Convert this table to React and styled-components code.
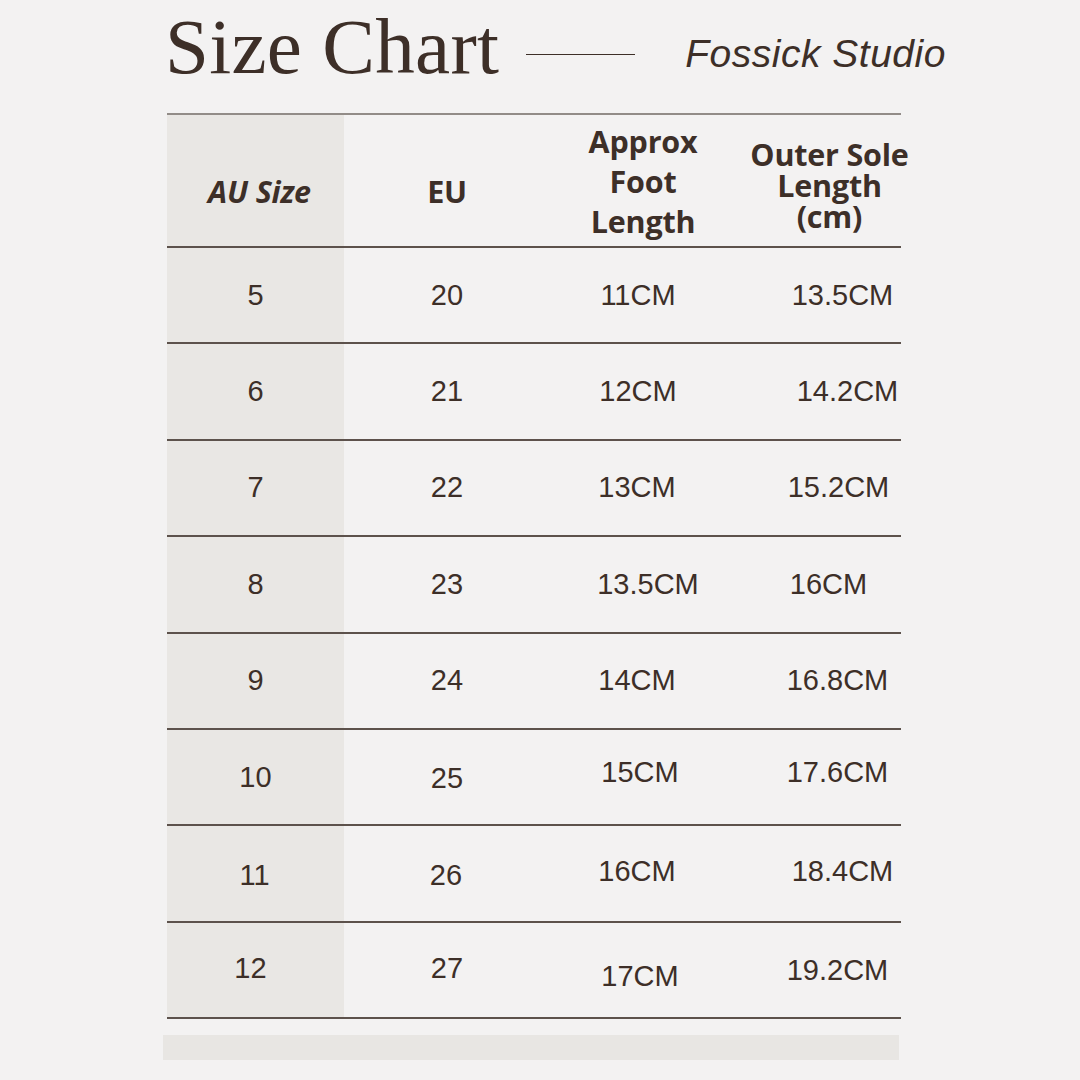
import React from 'react'
import styled, { createGlobalStyle } from 'styled-components'

const GlobalStyle = createGlobalStyle`
  html, body {
    margin: 0;
    padding: 0;
    background: #f3f2f2;
  }
  body {
    width: 1080px;
    height: 1080px;
    overflow: hidden;
  }
`

const ink = '#3d2f28'

const Page = styled.div`
  width: 740px;
  margin-left: 163px;
  padding-top: 10px;
  color: ${ink};
`

const TitleBar = styled.div`
  display: flex;
  align-items: center;
  height: 84px;
  padding-left: 2px;
  width: 800px;
`

const Title = styled.h1`
  margin: 0 0 12px 0;
  flex-shrink: 0;
  white-space: nowrap;
  font-family: "Liberation Serif", serif;
  font-weight: 400;
  font-size: 79px;
  line-height: 1;
  letter-spacing: 0.3px;
`

const Rule = styled.span`
  display: block;
  flex-shrink: 0;
  width: 109px;
  height: 1px;
  background: ${ink};
  margin: 4px 50px 0 27px;
`

const Brand = styled.span`
  flex-shrink: 0;
  font-family: "Liberation Sans", sans-serif;
  font-style: italic;
  font-weight: 400;
  font-size: 39px;
  letter-spacing: 0.5px;
  margin-top: 4px;
  white-space: nowrap;
`

const Table = styled.div`
  margin: 19px 0 0 4px;
  width: 734px;
  border-top: 2px solid #928c88;
`

const Row = styled.div`
  display: grid;
  grid-template-columns: 177px 206px 180px 171px;
  height: ${p => p.$h}px;
  border-bottom: 2px solid #5d524c;
`

const Cell = styled.div`
  display: flex;
  align-items: center;
  justify-content: center;
  background: ${p => (p.$shade ? '#e9e7e4' : 'transparent')};
  overflow: visible;
`

const HeadText = styled.span`
  font-family: "Open Sans", "Liberation Sans", sans-serif;
  font-weight: 700;
  font-style: ${p => (p.$italic ? 'italic' : 'normal')};
  font-size: 30.5px;
  letter-spacing: -0.2px;
  line-height: ${p => p.$lh}px;
  text-align: center;
  white-space: nowrap;
  transform: translate(${p => p.$dx || 0}px, ${p => p.$dy || 0}px);
`

const Value = styled.span`
  font-family: "Liberation Sans", Arial, sans-serif;
  font-size: 29px;
  line-height: 1;
  white-space: nowrap;
  transform: translate(${p => p.$dx || 0}px, ${p => p.$dy || 0}px);
`

const Footer = styled.div`
  height: 25px;
  margin-top: 16px;
  background: #e8e6e3;
  width: 736px;
`

// base horizontal shift per column, jitter per cell on top
const COL_SHIFT = [0, 0, 0, 22]

const headers = [
  { lines: ['AU Size'], italic: true, dx: 4, dy: 10, lh: 36 },
  { lines: ['EU'], dx: 0, dy: 10, lh: 36 },
  { lines: ['Approx', 'Foot', 'Length'], dx: 3, dy: 0, lh: 40 },
  { lines: ['Outer Sole', 'Length', '(cm)'], dx: 14, dy: 5, lh: 31 },
]

const rows = [
  [['5'], ['20'], ['11CM', -2], ['13.5CM', 5]],
  [['6'], ['21'], ['12CM', -2], ['14.2CM', 10]],
  [['7'], ['22'], ['13CM', -3], ['15.2CM', 1]],
  [['8'], ['23'], ['13.5CM', 8], ['16CM', -9]],
  [['9'], ['24'], ['14CM', -3], ['16.8CM', 0]],
  [['10', 0], ['25', 0, 1], ['15CM', 0, -5], ['17.6CM', 0, -5]],
  [['11', -1, 2], ['26', -1, 2], ['16CM', -3, -2], ['18.4CM', 5, -2]],
  [['12', -5, -1], ['27', 0, -1], ['17CM', 0, 7], ['19.2CM', 0, 1]],
]

export default function App() {
  return (
    <>
      <GlobalStyle />
      <Page>
        <TitleBar>
          <Title>Size Chart</Title>
          <Rule />
          <Brand>Fossick Studio</Brand>
        </TitleBar>

        <Table>
          <Row $h={131}>
            {headers.map((h, i) => (
              <Cell key={i} $shade={i === 0}>
                <HeadText $italic={h.italic} $dx={h.dx} $dy={h.dy} $lh={h.lh}>
                  {h.lines.map((l, j) => (
                    <React.Fragment key={j}>
                      {j > 0 && <br />}
                      {l}
                    </React.Fragment>
                  ))}
                </HeadText>
              </Cell>
            ))}
          </Row>

          {rows.map((r, i) => (
            <Row key={i} $h={94.4}>
              {r.map(([v, dx = 0, dy = 0], j) => (
                <Cell key={j} $shade={j === 0}>
                  <Value $dx={COL_SHIFT[j] + dx} $dy={dy}>{v}</Value>
                </Cell>
              ))}
            </Row>
          ))}
        </Table>

        <Footer />
      </Page>
    </>
  )
}
